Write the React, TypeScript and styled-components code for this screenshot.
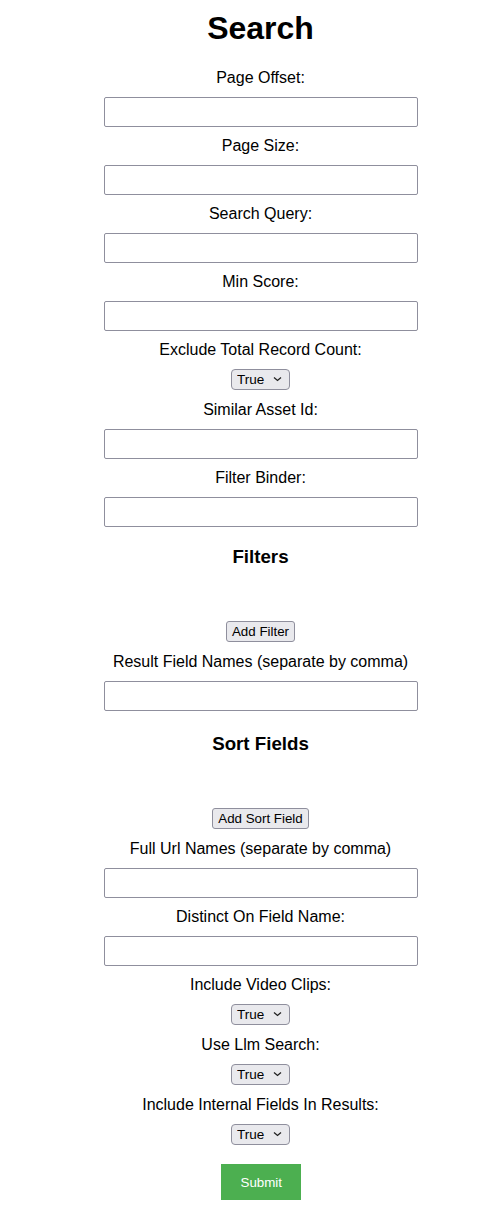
import * as React from 'react'
import styled, {createGlobalStyle} from 'styled-components'

const GlobalStyle = createGlobalStyle`
  body {
    margin: 8px;
    background: #ffffff;
    color: #000000;
    font-family: "Liberation Sans", Arial, sans-serif;
  }
`

type Field =
  | {kind: 'text'; label: string}
  | {kind: 'bool'; label: string}
  | {kind: 'section'; title: string; action: string; offset: number}

const fields: Field[] = [
  {kind: 'text', label: 'Page Offset:'},
  {kind: 'text', label: 'Page Size:'},
  {kind: 'text', label: 'Search Query:'},
  {kind: 'text', label: 'Min Score:'},
  {kind: 'bool', label: 'Exclude Total Record Count:'},
  {kind: 'text', label: 'Similar Asset Id:'},
  {kind: 'text', label: 'Filter Binder:'},
  {kind: 'section', title: 'Filters', action: 'Add Filter', offset: 11},
  {kind: 'text', label: 'Result Field Names (separate by comma)'},
  {kind: 'section', title: 'Sort Fields', action: 'Add Sort Field', offset: 14},
  {kind: 'text', label: 'Full Url Names (separate by comma)'},
  {kind: 'text', label: 'Distinct On Field Name:'},
  {kind: 'bool', label: 'Include Video Clips:'},
  {kind: 'bool', label: 'Use Llm Search:'},
  {kind: 'bool', label: 'Include Internal Fields In Results:'},
]

const Page = styled.div`
  display: flex;
  flex-direction: column;
  align-items: center;
  padding-left: 22px;
  text-align: center;
`

const Title = styled.h1`
  margin: 2px 0 20px;
  font-size: 32px;
  line-height: 37px;
  font-weight: bold;
`

const Form = styled.form`
  display: flex;
  flex-direction: column;
  align-items: center;
`

const Label = styled.label`
  display: block;
  margin: 0 0 10px;
  padding-top: 2px;
  font-size: 16px;
  line-height: 18px;
`

const TextInput = styled.input`
  box-sizing: border-box;
  width: 314px;
  height: 30px;
  margin: 0 0 8px;
  padding: 4px 6px;
  border: 1px solid #8f8f9d;
  border-radius: 2px;
  background: #ffffff;
  font-family: "Liberation Sans", Arial, sans-serif;
  font-size: 14px;
`

const SelectWrap = styled.div`
  position: relative;
  width: 59px;
  height: 21px;
  margin: 0 0 9px;
`

const Select = styled.select`
  appearance: none;
  box-sizing: border-box;
  width: 100%;
  height: 100%;
  margin: 0;
  padding: 0 0 0 5px;
  border: 1px solid #8f8f9d;
  border-radius: 4px;
  background-color: #e9e9ed;
  color: #000000;
  font-family: "Liberation Sans", Arial, sans-serif;
  font-size: 13.5px;
`

const Chevron = styled.svg`
  position: absolute;
  right: 8px;
  top: 7px;
  width: 9px;
  height: 6px;
  pointer-events: none;
`

const SectionTitle = styled.h3<{$offset: number}>`
  margin: ${p => p.$offset}px 0 53px;
  font-size: 18.72px;
  line-height: 22px;
  font-weight: bold;
`

const AddButton = styled.button`
  box-sizing: border-box;
  height: 21px;
  margin: 0 0 9px;
  padding: 0 5px;
  border: 1px solid #8f8f9d;
  border-radius: 3px;
  background: #e9e9ed;
  color: #000000;
  font-family: "Liberation Sans", Arial, sans-serif;
  font-size: 13.33px;
  line-height: 19px;
`

const SubmitButton = styled.button`
  box-sizing: border-box;
  width: 80px;
  height: 36px;
  margin: 10px 0 0;
  padding: 0 20px;
  border: none;
  background: #4caf50;
  color: #ffffff;
  font-family: "Liberation Sans", Arial, sans-serif;
  font-size: 13.33px;
`

function BoolSelect() {
  return (
    <SelectWrap>
      <Select defaultValue='true'>
        <option value='true'>True</option>
        <option value='false'>False</option>
      </Select>
      <Chevron viewBox='0 0 9 6'>
        <path d='M1 1.5 L4.5 4.5 L8 1.5' fill='none' stroke='#222' strokeWidth='1.3' />
      </Chevron>
    </SelectWrap>
  )
}

export default function App() {
  return (
    <>
      <GlobalStyle />
      <Page>
        <Title>Search</Title>
        <Form onSubmit={e => e.preventDefault()}>
          {fields.map((field, i) => {
            if (field.kind === 'section') {
              return (
                <React.Fragment key={i}>
                  <SectionTitle $offset={field.offset}>{field.title}</SectionTitle>
                  <AddButton type='button'>{field.action}</AddButton>
                </React.Fragment>
              )
            }
            return (
              <React.Fragment key={i}>
                <Label>{field.label}</Label>
                {field.kind === 'text' ? <TextInput type='text' /> : <BoolSelect />}
              </React.Fragment>
            )
          })}
          <SubmitButton type='submit'>Submit</SubmitButton>
        </Form>
      </Page>
    </>
  )
}
